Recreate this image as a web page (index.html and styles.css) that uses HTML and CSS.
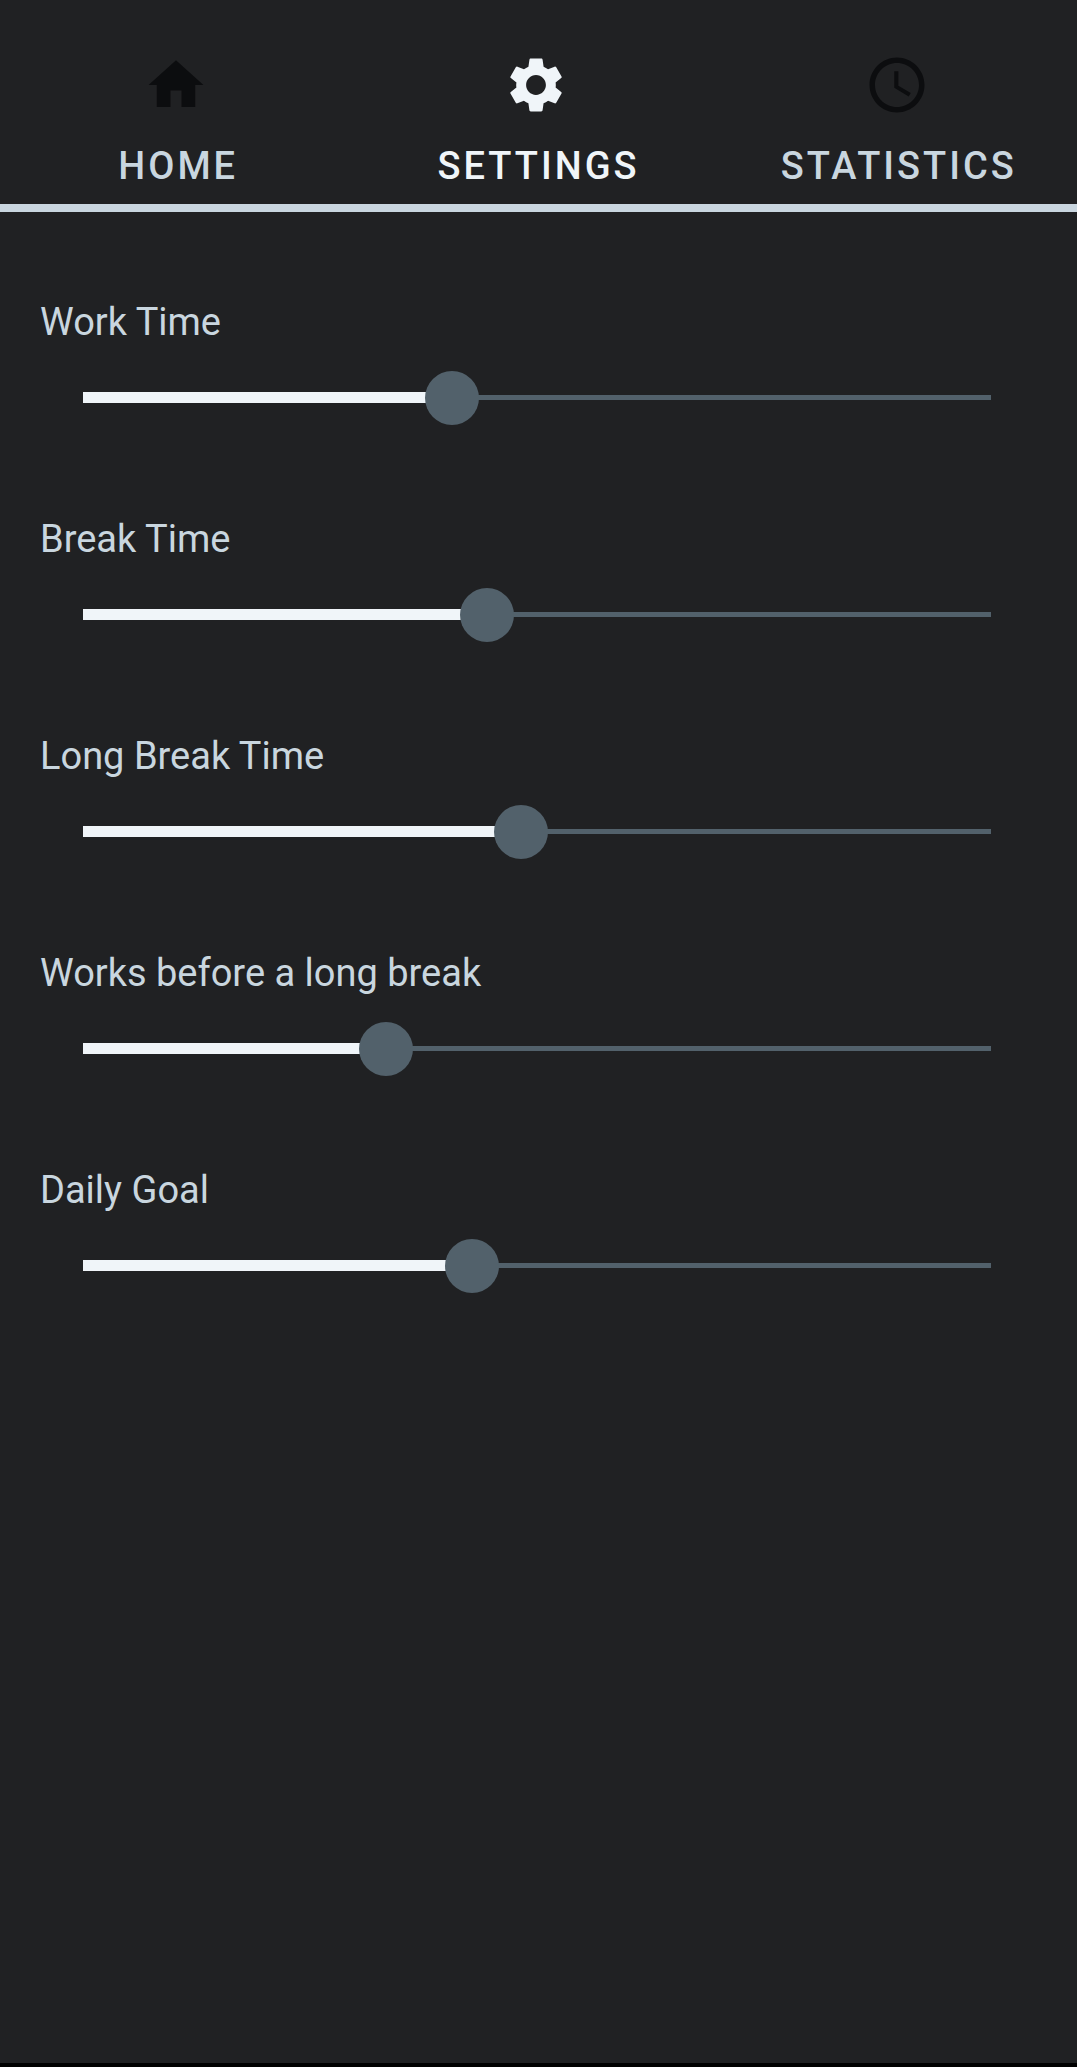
FILE: index.html
```html
<!DOCTYPE html>
<html lang="en">
<head>
<meta charset="utf-8">
<meta name="viewport" content="width=device-width, initial-scale=1">
<title>Settings</title>
<link rel="stylesheet" href="styles.css">
</head>
<body>
<nav class="tabs">
  <a class="tab" href="#home">
    <svg class="tab-icon" viewBox="0 0 24 24" aria-hidden="true"><path d="M10 20v-6h4v6h5v-8h3L12 3 2 12h3v8z"/></svg>
    <span class="tab-label">HOME</span>
  </a>
  <a class="tab tab-active" href="#settings" aria-current="page">
    <svg class="tab-icon" viewBox="0 0 24 24" aria-hidden="true"><path d="M19.14 12.94c.04-.3.06-.61.06-.94 0-.32-.02-.64-.07-.94l2.03-1.58c.18-.14.23-.41.12-.61l-1.92-3.32c-.12-.22-.37-.29-.59-.22l-2.39.96c-.5-.38-1.03-.7-1.62-.94L14.4 2.81c-.04-.24-.24-.41-.48-.41h-3.84c-.24 0-.43.17-.47.41L9.25 5.35C8.66 5.59 8.12 5.92 7.63 6.29L5.24 5.33c-.22-.08-.47 0-.59.22L2.74 8.87c-.12.21-.08.47.12.61l2.03 1.58c-.05.3-.09.63-.09.94s.02.64.07.94l-2.03 1.58c-.18.14-.23.41-.12.61l1.92 3.32c.12.22.37.29.59.22l2.39-.96c.5.38 1.03.7 1.62.94l.36 2.54c.05.24.24.41.48.41h3.84c.24 0 .44-.17.47-.41l.36-2.54c.59-.24 1.13-.56 1.62-.94l2.39.96c.22.08.47 0 .59-.22l1.92-3.32c.12-.22.07-.47-.12-.61zM12 15.6c-1.98 0-3.6-1.62-3.6-3.6s1.62-3.6 3.6-3.6 3.6 1.62 3.6 3.6-1.62 3.6-3.6 3.6z"/></svg>
    <span class="tab-label">SETTINGS</span>
  </a>
  <a class="tab" href="#statistics">
    <svg class="tab-icon" viewBox="0 0 24 24" aria-hidden="true"><path d="M11.99 2C6.47 2 2 6.48 2 12s4.47 10 9.99 10C17.52 22 22 17.52 22 12S17.52 2 11.99 2zM12 20c-4.42 0-8-3.58-8-8s3.58-8 8-8 8 3.58 8 8-3.58 8-8 8z"/><path d="M12.5 7H11v6l5.25 3.15.75-1.23-4.5-2.67z"/></svg>
    <span class="tab-label">STATISTICS</span>
  </a>
</nav>
<main class="settings">
  <div class="setting">
    <label for="work">Work Time</label>
    <input class="slider" id="work" type="range" min="1" max="60" value="25" style="--fill: 0.4068">
  </div>
  <div class="setting">
    <label for="break">Break Time</label>
    <input class="slider" id="break" type="range" min="1" max="10" value="5" style="--fill: 0.4444">
  </div>
  <div class="setting">
    <label for="long-break">Long Break Time</label>
    <input class="slider" id="long-break" type="range" min="1" max="30" value="15" style="--fill: 0.4828">
  </div>
  <div class="setting">
    <label for="works">Works before a long break</label>
    <input class="slider" id="works" type="range" min="1" max="10" value="4" style="--fill: 0.3333">
  </div>
  <div class="setting">
    <label for="goal">Daily Goal</label>
    <input class="slider" id="goal" type="range" min="1" max="8" value="4" style="--fill: 0.4286">
  </div>
</main>
</body>
</html>
```
FILE: styles.css
```css
:root {
  --background: #202123;
  --text: #c9d6df;
  --bright: #f0f5f9;
  --slate: #52616b;
  --icon: #0c0d0f;
}

* {
  box-sizing: border-box;
}

body {
  margin: 0;
  min-height: 100vh;
  overflow-x: hidden;
  background: var(--background);
  border-bottom: 4px solid #000;
  color: var(--text);
  font-family: Roboto, sans-serif;
  font-size: 38px;
  line-height: 45px;
}

.tabs {
  display: grid;
  grid-template-columns: repeat(3, 1fr);
  margin-left: -4px;
  padding: 52px 0 15px;
  border-bottom: 8px solid var(--text);
}

.tab {
  display: flex;
  flex-direction: column;
  align-items: center;
  gap: 26px;
  color: inherit;
  font-weight: 500;
  letter-spacing: 3px;
  text-decoration: none;
}

/* balances the letter spacing after the last letter */
.tab-label {
  padding-left: 4px;
}

.tab-active {
  color: var(--bright);
}

.tab-icon {
  width: 66px;
  height: 66px;
  fill: var(--icon);
}

.tab-active .tab-icon {
  fill: currentColor;
}

.settings {
  display: flex;
  flex-direction: column;
  gap: 92px;
  padding: 88px 59px 88px 40px;
}

.setting {
  display: flex;
  flex-direction: column;
  gap: 25px;
}

.slider {
  --track: calc(100% - 54px);
  appearance: none;
  height: 55px;
  margin: 0 0 0 16px;
  background:
    linear-gradient(var(--bright), var(--bright)) 27px center / calc(var(--track) * var(--fill)) 11px no-repeat,
    linear-gradient(var(--slate), var(--slate)) 27px center / var(--track) 5px no-repeat;
}

.slider::-webkit-slider-thumb {
  appearance: none;
  width: 54px;
  height: 54px;
  border-radius: 50%;
  background: var(--slate);
}

.slider::-moz-range-thumb {
  width: 54px;
  height: 54px;
  border: 0;
  border-radius: 50%;
  background: var(--slate);
}
```
